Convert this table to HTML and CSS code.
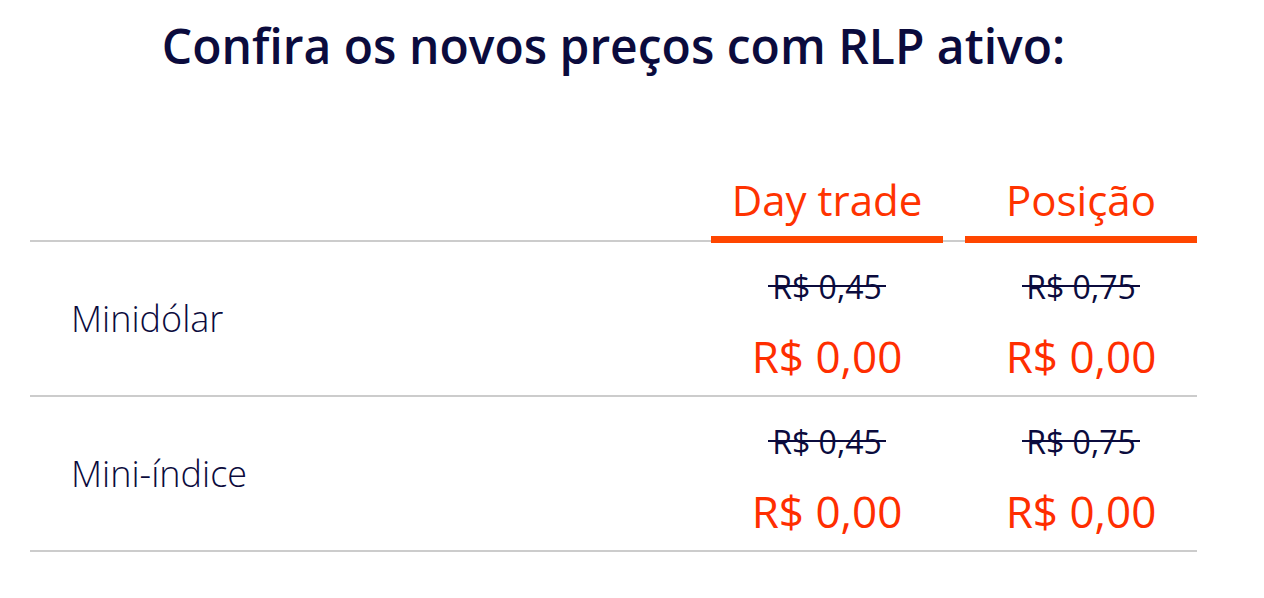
FILE: index.html
```html
<!DOCTYPE html>
<html lang="pt-BR">
<head>
<meta charset="utf-8">
<title>Confira os novos preços com RLP ativo</title>
<link rel="stylesheet" href="styles.css">
</head>
<body>
<main class="container">
  <h1 class="title">Confira os novos preços com RLP ativo:</h1>
  <div class="table">
    <div class="row head">
      <div class="cell"></div>
      <div class="cell th">Day trade</div>
      <div class="cell th">Posição</div>
    </div>
    <div class="row">
      <div class="cell label">Minidólar</div>
      <div class="cell price">
        <span class="old">R$ 0,45</span>
        <span class="new">R$ 0,00</span>
      </div>
      <div class="cell price">
        <span class="old">R$ 0,75</span>
        <span class="new">R$ 0,00</span>
      </div>
    </div>
    <div class="row">
      <div class="cell label">Mini-índice</div>
      <div class="cell price">
        <span class="old">R$ 0,45</span>
        <span class="new">R$ 0,00</span>
      </div>
      <div class="cell price">
        <span class="old">R$ 0,75</span>
        <span class="new">R$ 0,00</span>
      </div>
    </div>
  </div>
</main>
</body>
</html>
```

FILE: styles.css
```css
html, body {
  margin: 0;
  padding: 0;
  background: #ffffff;
}

body {
  font-family: "Open Sans", "Noto Sans", sans-serif;
  color: #0b0b3d;
}

.container {
  width: 1167px;
  margin-left: 30px;
}

.title {
  margin: 17px 0 0;
  font-size: 48px;
  line-height: 58px;
  font-weight: 560;
  text-align: center;
  color: #0b0b3d;
}

.table {
  margin-top: 100px;
  display: flex;
  flex-direction: column;
}

.row {
  display: grid;
  grid-template-columns: 1fr 232px 232px;
  column-gap: 22px;
  border-bottom: 2px solid #cccccc;
}

.head .th {
  font-size: 42px;
  line-height: 50px;
  font-weight: 400;
  color: #ff3300;
  text-align: center;
  padding-bottom: 11px;
  border-bottom: 7px solid #ff4600;
  margin-bottom: -3px;
}

.row:not(.head) {
  height: 153px;
}

.label {
  align-self: center;
  padding-left: 41px;
  font-size: 36px;
  line-height: 44px;
  font-weight: 300;
  color: #0b0b3d;
}

.price {
  display: flex;
  flex-direction: column;
  align-items: center;
  padding-top: 25px;
}

.old {
  padding: 0 4px;
  font-size: 32px;
  line-height: 40px;
  font-weight: 400;
  color: #0b0b3d;
  background: linear-gradient(#0b0b3d, #0b0b3d) no-repeat 0 18px / 100% 2px;
}

.new {
  margin-top: 23px;
  font-size: 44px;
  line-height: 52px;
  font-weight: 400;
  color: #ff2e00;
}
```
